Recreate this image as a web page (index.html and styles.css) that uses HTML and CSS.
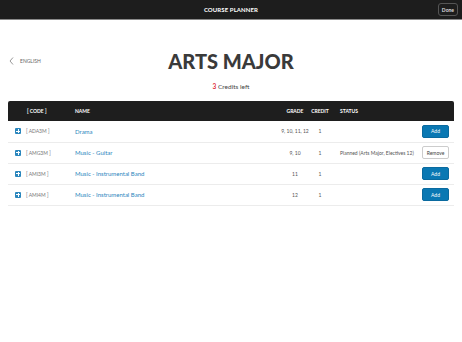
FILE: index.html
```html
<!DOCTYPE html>
<html lang="en">
<head>
    <meta charset="UTF-8">
    <meta name="viewport" content="width=device-width, initial-scale=1.0">
    <title>Course Planner</title>
    <link rel="stylesheet" href="styles.css">
</head>
<body>

<header class="topbar">
    <span class="topbar-title">COURSE PLANNER</span>
    <button class="done-btn">Done</button>
</header>

<section class="intro">
    <a class="back-link" href="#">
        <svg width="5" height="8" viewBox="0 0 5 8"><path d="M4 0.5 L1 4 L4 7.5" fill="none" stroke="#999" stroke-width="1"/></svg>
        <span>ENGLISH</span>
    </a>
    <h1>ARTS MAJOR</h1>
    <p class="credits"><span class="credits-num">3</span> Credits left</p>
</section>

<table class="courses">
    <thead>
        <tr>
            <th class="col-code">[ CODE ]</th>
            <th class="col-name">NAME</th>
            <th class="col-grade">GRADE</th>
            <th class="col-credit">CREDIT</th>
            <th class="col-status">STATUS</th>
            <th class="col-action"></th>
        </tr>
    </thead>
    <tbody>
        <tr>
            <td class="col-code"><div class="code-cell"><span class="plus"></span>[ ADA3M ]</div></td>
            <td class="col-name"><a href="#">Drama</a></td>
            <td class="col-grade">9, 10, 11, 12</td>
            <td class="col-credit">1</td>
            <td class="col-status"></td>
            <td class="col-action"><button class="btn-add">Add</button></td>
        </tr>
        <tr>
            <td class="col-code"><div class="code-cell"><span class="plus"></span>[ AMG3M ]</div></td>
            <td class="col-name"><a href="#">Music - Guitar</a></td>
            <td class="col-grade">9, 10</td>
            <td class="col-credit">1</td>
            <td class="col-status">Planned (Arts Major, Electives 12)</td>
            <td class="col-action"><button class="btn-remove">Remove</button></td>
        </tr>
        <tr>
            <td class="col-code"><div class="code-cell"><span class="plus"></span>[ AMI3M ]</div></td>
            <td class="col-name"><a href="#">Music - Instrumental Band</a></td>
            <td class="col-grade">11</td>
            <td class="col-credit">1</td>
            <td class="col-status"></td>
            <td class="col-action"><button class="btn-add">Add</button></td>
        </tr>
        <tr>
            <td class="col-code"><div class="code-cell"><span class="plus"></span>[ AMI4M ]</div></td>
            <td class="col-name"><a href="#">Music - Instrumental Band</a></td>
            <td class="col-grade">12</td>
            <td class="col-credit">1</td>
            <td class="col-status"></td>
            <td class="col-action"><button class="btn-add">Add</button></td>
        </tr>
    </tbody>
</table>

</body>
</html>
```

FILE: styles.css
```css
body {
    font-family: Lato, "Open Sans", sans-serif;
    margin: 0;
    background-color: #fff;
    color: #333;
}
.topbar {
    height: 19px;
    background-color: #1d1d1d;
    border-bottom: 1px solid #8a8a8a;
    display: flex;
    align-items: center;
    justify-content: center;
    position: relative;
}
.topbar-title {
    color: #fff;
    font-size: 6px;
    font-weight: bold;
    letter-spacing: 0.1px;
}
.done-btn {
    position: absolute;
    right: 4px;
    top: 3px;
    height: 13px;
    padding: 0 3px;
    background: #1d1d1d;
    border: 1px solid #555;
    border-radius: 3px;
    color: #ddd;
    font-family: inherit;
    font-size: 5px;
    font-weight: bold;
}
.intro {
    position: relative;
    padding-top: 29px;
    text-align: center;
}
.back-link {
    position: absolute;
    left: 9px;
    top: 37px;
    display: flex;
    align-items: center;
    gap: 6px;
    color: #666;
    text-decoration: none;
    font-size: 5px;
}
h1 {
    margin: 0;
    font-size: 20px;
    font-weight: 900;
    color: #3a3a3a;
    line-height: 24px;
}
.credits {
    margin: 10px 0 0;
    font-size: 6.5px;
    color: #444;
}
.credits-num {
    color: #e0303a;
    font-weight: bold;
}
table.courses {
    margin: 11px 8px 0;
    width: 446px;
    table-layout: fixed;
    border-collapse: collapse;
    font-size: 5px;
}
.courses th,
.courses td {
    box-sizing: border-box;
    padding: 0;
}
.courses th {
    background-color: #1e1e1e;
    color: #fff;
    height: 20px;
    font-weight: bold;
    text-align: left;
}
.courses th:first-child {
    border-top-left-radius: 2px;
}
.courses th:last-child {
    border-top-right-radius: 2px;
}
.courses td {
    height: 21px;
    border-bottom: 1px solid #ececec;
    color: #555;
}
.col-code { width: 67px; }
.col-name { width: 205px; }
.col-grade { width: 30px; }
.col-credit { width: 20px; }
.col-status { width: 80px; }
.col-action { width: 44px; }
.courses th.col-code {
    padding-left: 19px;
}
.courses td.col-code {
    padding-left: 7px;
}
.code-cell {
    display: flex;
    align-items: center;
    gap: 5px;
    color: #777;
}
.courses .col-grade,
.courses .col-credit {
    text-align: center;
}
.courses .col-status {
    padding-left: 10px;
    white-space: nowrap;
}
.courses .col-action {
    text-align: right;
    padding-right: 5px;
}
.col-name a {
    color: #2a86bd;
    text-decoration: none;
    font-size: 6px;
}
.plus {
    display: inline-block;
    width: 6px;
    height: 6px;
    background-color: #2a86bd;
    border-radius: 1px;
    position: relative;
}
.plus::before, .plus::after {
    content: "";
    position: absolute;
    background: #fff;
}
.plus::before {
    left: 1px;
    top: 2.5px;
    width: 4px;
    height: 1px;
}
.plus::after {
    left: 2.5px;
    top: 1px;
    width: 1px;
    height: 4px;
}
.btn-add, .btn-remove {
    width: 27px;
    height: 13px;
    border-radius: 2px;
    font-family: inherit;
    font-size: 5px;
    padding: 0;
}
.btn-add {
    background-color: #0a78b3;
    border: 1px solid #0a6a9f;
    color: #fff;
}
.btn-remove {
    background-color: #fff;
    border: 1px solid #ccc;
    color: #444;
}
```
